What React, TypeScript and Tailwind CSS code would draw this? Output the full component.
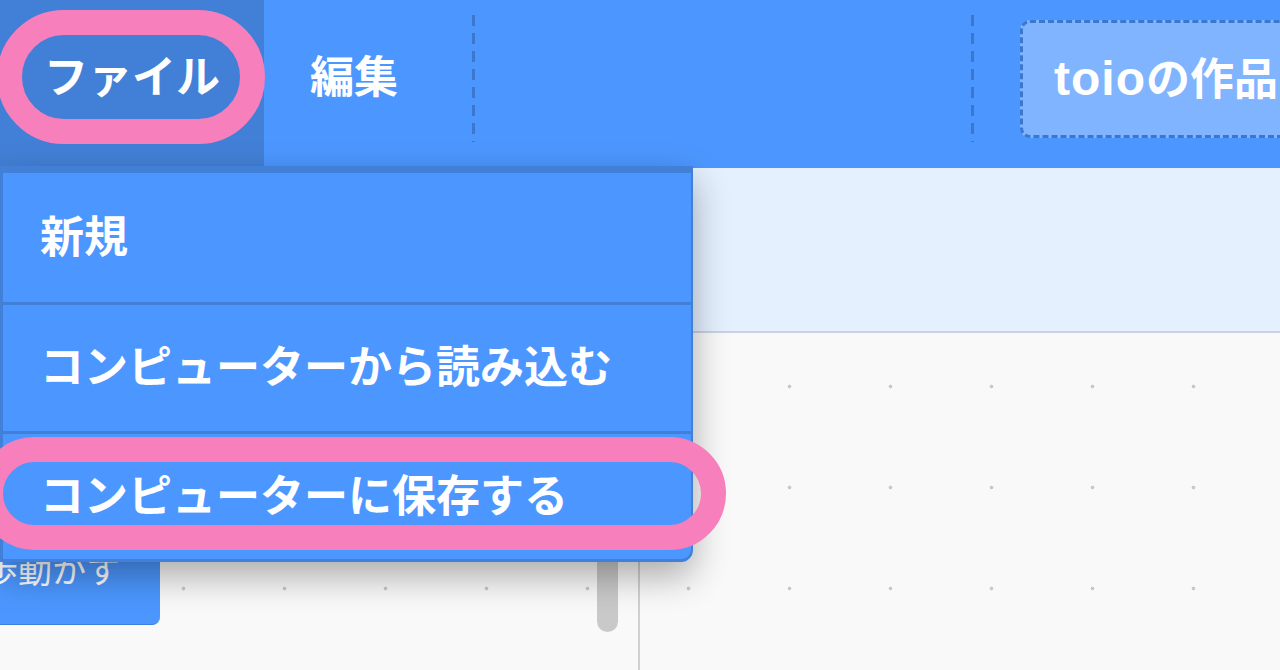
import React from "react";

const FONT = "font-['Liberation_Sans','Noto_Sans_CJK_JP',sans-serif]";

function DashedDivider() {
  return (
    <div className="mt-[15px] h-[127px] w-[3px] shrink-0 bg-[repeating-linear-gradient(to_bottom,#3b77cc_0px,#3b77cc_11px,transparent_11px,transparent_18px)]" />
  );
}

function MenuBar() {
  return (
    <div className="flex h-[168px] w-full shrink-0 bg-[#4c97ff]">
      <div className="flex h-full w-[264px] shrink-0 items-start justify-center bg-[#4280d7] pt-[52px]">
        <span className="text-[44px] font-bold leading-[52px] text-white">ファイル</span>
      </div>
      <div className="flex h-full w-[208px] shrink-0 items-start pl-[46px] pt-[52px]">
        <span className="text-[44px] font-bold leading-[52px] text-white">編集</span>
      </div>
      <DashedDivider />
      <div className="w-[496px] shrink-0" />
      <DashedDivider />
      <div className="ml-[46px] mt-[20px] flex h-[118px] w-[300px] shrink-0 items-center overflow-hidden rounded-[10px] border-[3px] border-dashed border-[#3b77cc] bg-[#80b4ff] pl-[31px]">
        <span className="whitespace-nowrap text-[44px] font-bold text-white">
          <span className="text-[48px] tracking-[1px]">toio</span>の作品
        </span>
      </div>
    </div>
  );
}

function FileMenu() {
  const items = [
    { label: "新規", h: "h-[129px]" },
    { label: "コンピューターから読み込む", h: "h-[126px]" },
    { label: "コンピューターに保存する", h: "h-[125px]" },
  ];
  return (
    <div className="absolute left-0 top-[166px] z-20 w-[693px] overflow-hidden rounded-br-[12px] border-b-[3px] border-l-[3px] border-r-[2px] border-t-[7px] border-[#4280d7] bg-[#4280d7] shadow-[0_14px_36px_rgba(0,0,0,0.32)]">
      {items.map((it, i) => (
        <div
          key={it.label}
          className={`${it.h} flex items-center bg-[#4c97ff] pl-[37px] ${i > 0 ? "mt-[3px]" : ""}`}
        >
          <span className="text-[44px] font-bold text-white">{it.label}</span>
        </div>
      ))}
    </div>
  );
}

export default function App() {
  return (
    <div className={`relative h-[670px] w-[1280px] overflow-hidden bg-[#f9f9f9] ${FONT}`}>
      <div className="flex h-full flex-col">
        <MenuBar />

        {/* tabs / stage header band */}
        <div className="h-[165px] w-full shrink-0 border-b-2 border-[#c9d3e1] bg-[#e5f0ff]" />

        {/* workspace */}
        <div className="flex flex-1 bg-[#f9f9f9] bg-[radial-gradient(circle,#c9c9c9_1.6px,transparent_2.2px)] bg-[length:101px_101px] bg-[position:32px_3px]">
          <div className="relative w-[638px] shrink-0">
            <div className="mt-[186px] flex h-[106px] w-[160px] items-center overflow-hidden rounded-br-[8px] border-b border-[#3f80de] bg-[#4c97ff]">
              <span className="ml-[-16px] whitespace-nowrap text-[34px] text-white">歩動かす</span>
            </div>
            <div className="absolute left-[597px] top-[60px] h-[239px] w-[21px] rounded-full bg-[#c9c9c9]" />
          </div>
          <div className="w-[2px] shrink-0 bg-[#d0d0d0]" />
          <div className="flex-1" />
        </div>
      </div>

      <FileMenu />

      {/* pink highlight rings */}
      <div className="pointer-events-none absolute left-[-3px] top-[10px] z-30 h-[134px] w-[268px] rounded-full border-[25px] border-[#f67fbc]" />
      <div className="pointer-events-none absolute left-[-22px] top-[437px] z-30 h-[113px] w-[748px] rounded-full border-[25px] border-[#f67fbc]" />
    </div>
  );
}
